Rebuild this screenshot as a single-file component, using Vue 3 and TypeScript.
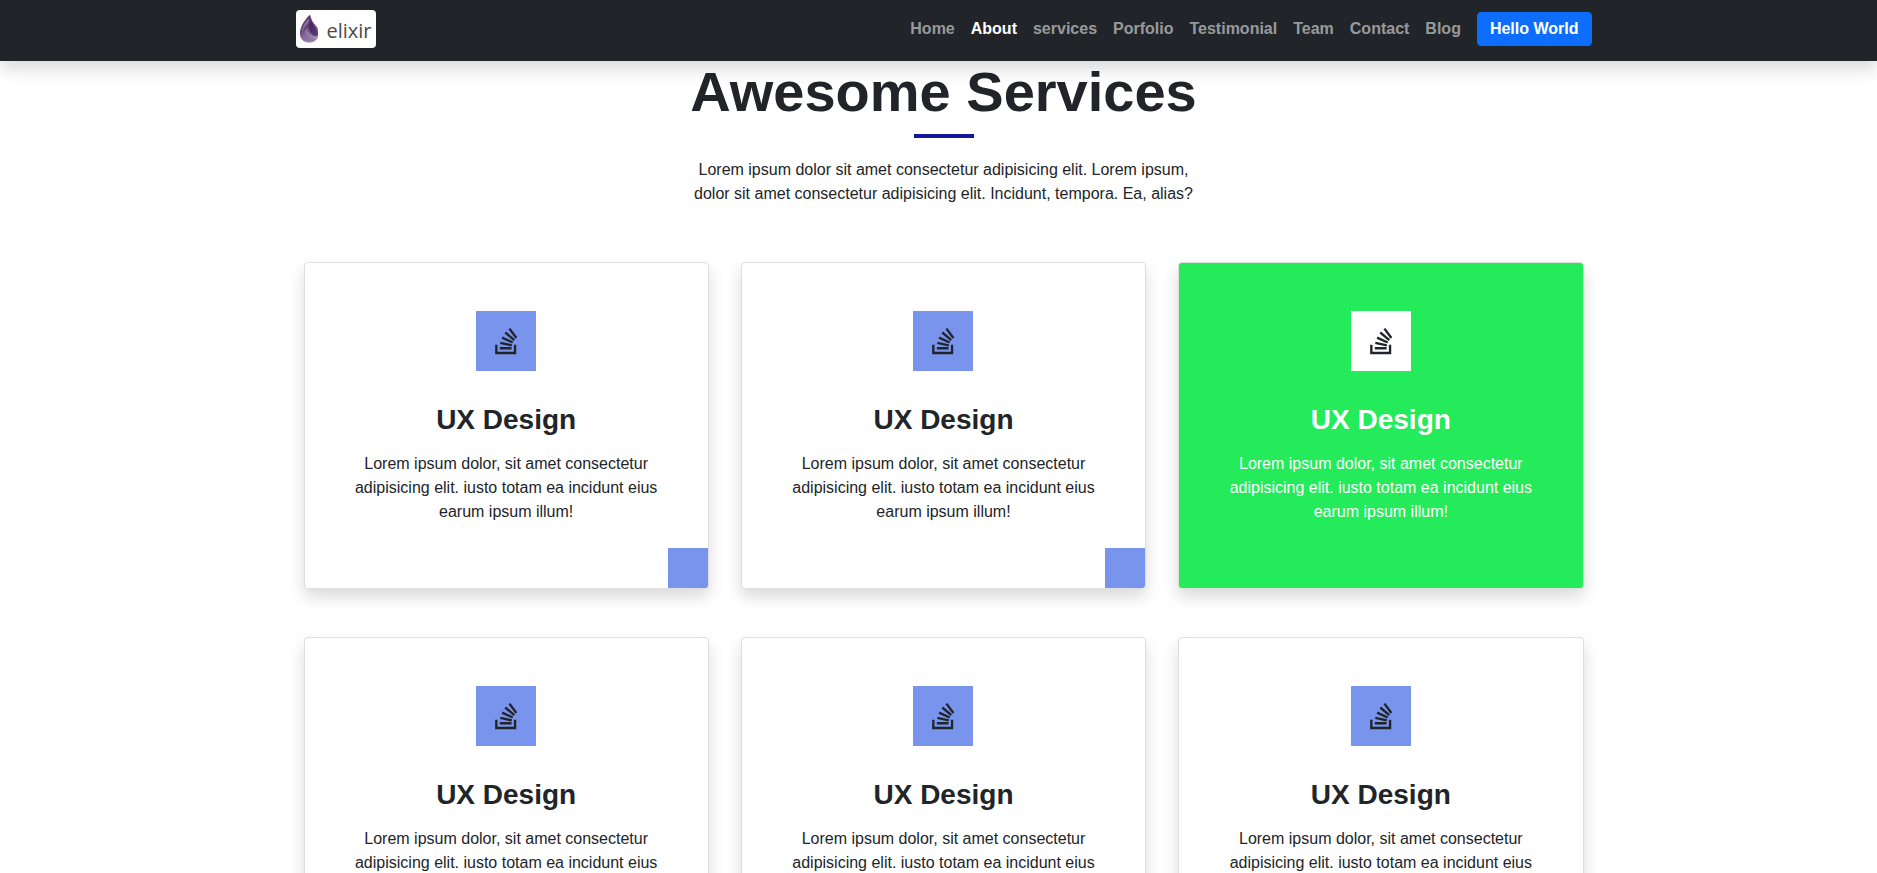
<script setup lang="ts">
interface NavItem {
  label: string
  active?: boolean
}

interface Service {
  id: number
  title: string
  text: string
  highlighted?: boolean
}

const navItems: NavItem[] = [
  { label: 'Home' },
  { label: 'About', active: true },
  { label: 'services' },
  { label: 'Porfolio' },
  { label: 'Testimonial' },
  { label: 'Team' },
  { label: 'Contact' },
  { label: 'Blog' },
]

const services: Service[] = [1, 2, 3, 4, 5, 6].map((id) => ({
  id,
  title: 'UX Design',
  text: 'Lorem ipsum dolor, sit amet consectetur adipisicing elit. iusto totam ea incidunt eius earum ipsum illum!',
  highlighted: id === 3,
}))
</script>

<template>
  <div class="page">
    <header class="navbar">
      <div class="container navbar-inner">
        <a class="brand" href="#">
          <svg class="drop" viewBox="0 0 20 30" aria-hidden="true">
            <defs>
              <linearGradient id="dropFill" x1="0" y1="0" x2="0.4" y2="1">
                <stop offset="0" stop-color="#54366a" />
                <stop offset="0.5" stop-color="#5f3c78" />
                <stop offset="1" stop-color="#a58db0" />
              </linearGradient>
            </defs>
            <path d="M10.500 0C6 4 0 12 0 19.500C0 25.500 4 29.500 10 29.500C16 29.500 20 25 20 19.500C20 14.500 17.500 12.500 14.500 9C12.300 6.300 11.600 3.500 10.500 0Z" fill="url(#dropFill)" />
            <path d="M9 4C5 8 1.500 14 2 20C3.500 14 6 12 8.500 9C9.500 7.500 9.500 6 9 4Z" fill="#a58fb2" opacity="0.65" />
            <path d="M11 6C9 12 9 17 13 21C15 23 17 23 19 21C19 15 14 12 11 6Z" fill="#40215c" opacity="0.75" />
            <path d="M5 17C6 22 10 26 17 25.500C12 30 3 28 2.500 22C3 20 4 18 5 17Z" fill="#8b6b9e" opacity="0.7" />
            <path d="M8 12C6 17 9 22 14 23C10 23.500 6 21 5.500 17Z" fill="#c0adc8" opacity="0.5" />
          </svg>
          <span class="brand-name">elixir</span>
        </a>
        <nav class="nav">
          <a
            v-for="item in navItems"
            :key="item.label"
            class="nav-link"
            :class="{ active: item.active }"
            href="#"
          >{{ item.label }}</a>
          <button class="cta" type="button">Hello World</button>
        </nav>
      </div>
    </header>

    <main class="services">
      <div class="container">
        <div class="intro">
          <h1 class="intro-title">Awesome Services</h1>
          <div class="rule"></div>
          <p class="intro-text">
            Lorem ipsum dolor sit amet consectetur adipisicing elit. Lorem ipsum,
            dolor sit amet consectetur adipisicing elit. Incidunt, tempora. Ea, alias?
          </p>
        </div>

        <div class="grid">
          <article
            v-for="service in services"
            :key="service.id"
            class="card"
            :class="{ highlighted: service.highlighted }"
          >
            <div class="card-icon">
              <svg viewBox="0 0 384 512" aria-hidden="true">
                <path d="M290.7 311L95 269.7 86.8 309l195.7 41zm51-87L188.200 95.700l-25.500 30.800 153.500 128.300zm-31.200 39.700L129.200 179l-16.700 36.500L293.700 300zM262 32l-32 24 119.300 160.300 32-24zm20.500 328h-200v39.700h200zm39.700 80H42.700V320h-40v160h359.500V320h-40z" />
              </svg>
            </div>
            <h2 class="card-title">{{ service.title }}</h2>
            <p class="card-text">{{ service.text }}</p>
            <span v-if="!service.highlighted" class="corner"></span>
          </article>
        </div>
      </div>
    </main>
  </div>
</template>

<style>
html {
  scrollbar-width: none;
}

body {
  margin: 0;
  background: #fff;
}
</style>

<style scoped>
.page {
  font-family: Arial, "Liberation Sans", sans-serif;
  font-size: 16px;
  line-height: 24px;
  color: #212529;
}

.page *,
.page *::before {
  box-sizing: border-box;
}

.container {
  max-width: 1320px;
  margin: 0 auto;
  padding: 0 12px;
}

.navbar {
  position: sticky;
  top: 0;
  z-index: 10;
  padding: 10px 0 13px 10px;
  background: #212529;
  box-shadow: 0 8px 16px rgba(0, 0, 0, 0.15);
}

.navbar-inner {
  display: flex;
  align-items: center;
  justify-content: space-between;
}

.brand {
  display: flex;
  align-items: center;
  gap: 8px;
  width: 80px;
  height: 38px;
  padding: 0 4px;
  border-radius: 4px;
  background: #fff;
  text-decoration: none;
}

.drop {
  width: 20px;
  height: 30px;
}

.brand-name {
  padding-top: 4px;
  font-family: "Open Sans", "Noto Sans", sans-serif;
  font-size: 20px;
  line-height: 28px;
  color: #4a4a4a;
}

.nav {
  display: flex;
  align-items: center;
}

.nav-link {
  padding: 0 8px;
  font-weight: 700;
  color: rgba(255, 255, 255, 0.55);
  text-decoration: none;
}

.nav-link.active {
  color: #fff;
}

.cta {
  margin: 0 0 0 8px;
  padding: 4px 12px;
  border: 1px solid #0d6efd;
  border-radius: 4px;
  background: #0d6efd;
  color: #fff;
  font: inherit;
  font-weight: 700;
}

.services {
  padding: 0 0 48px 10px;
}

.intro {
  max-width: 520px;
  margin: 0 auto 56px;
  text-align: center;
}

.intro-title {
  margin: 0;
  font-size: 56px;
  line-height: 62px;
  font-weight: 700;
  white-space: nowrap;
}

.rule {
  width: 60px;
  height: 4px;
  margin: 11px auto 20px;
  background: #15159c;
}

.intro-text {
  margin: 0;
}

.grid {
  display: grid;
  grid-template-columns: repeat(3, 1fr);
  gap: 48px 32px;
  padding: 0 8px;
}

.card {
  position: relative;
  padding: 48px 48px 64px;
  border: 1px solid #dfdfdf;
  border-radius: 4px;
  background: #fff;
  box-shadow: 0 8px 16px rgba(0, 0, 0, 0.15);
  text-align: center;
}

.card-icon {
  display: flex;
  align-items: center;
  justify-content: center;
  width: 60px;
  height: 60px;
  margin: 0 auto 32px;
  background: #7994ec;
}

.card-icon svg {
  height: 30px;
  fill: #212529;
}

.card-title {
  margin: 0 0 15px;
  font-size: 28px;
  line-height: 34px;
  font-weight: 700;
}

.card-text {
  margin: 0;
}

.corner {
  position: absolute;
  right: 0;
  bottom: 0;
  width: 40px;
  height: 40px;
  border-bottom-right-radius: 3px;
  background: #7994ec;
}

.highlighted {
  background-color: #23eb5a;
  color: #fff;
}

.highlighted .card-icon {
  background: #fff;
}
</style>
